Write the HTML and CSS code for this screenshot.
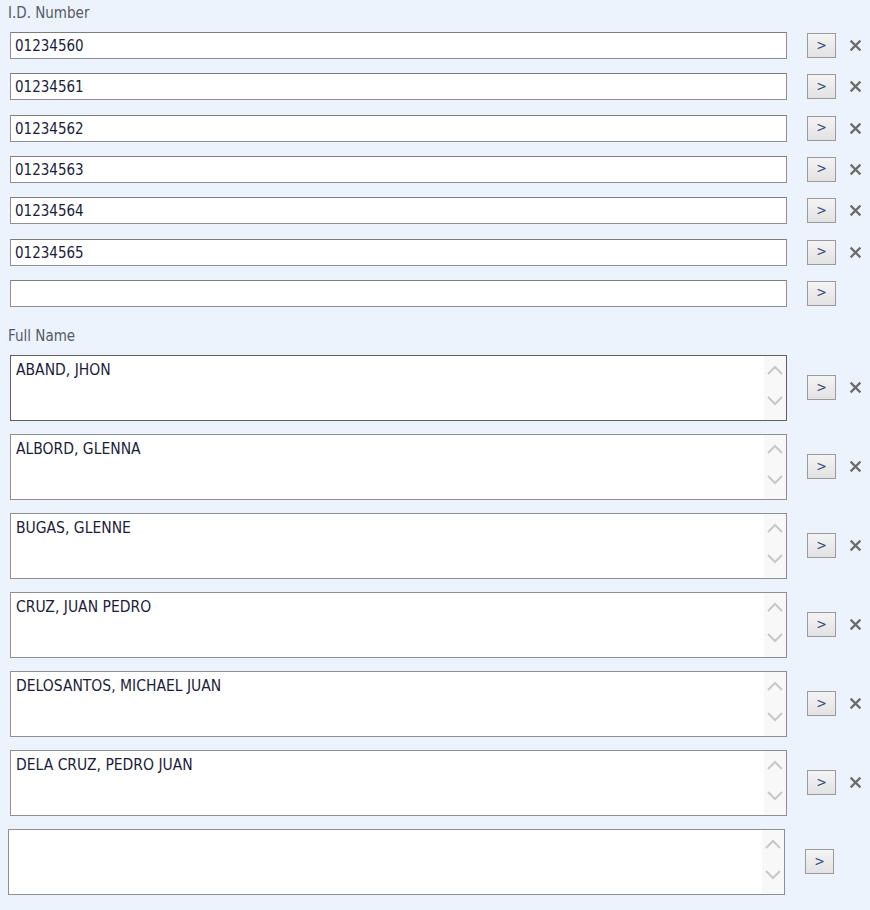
FILE: index.html
```html
<!DOCTYPE html>
<html>
<head>
<meta charset="utf-8">
<link rel="stylesheet" href="styles.css">
</head>
<body>
<div class="page">
  <div class="label label-id">I.D. Number</div>
  <div class="id-list">
    <div class="row"><input class="field" value="01234560"><button class="go">&gt;</button><span class="del"><svg viewBox="0 0 12 12"><path d="M1.5 1.5L10.5 10.5M10.5 1.5L1.5 10.5"/></svg></span></div>
    <div class="row"><input class="field" value="01234561"><button class="go">&gt;</button><span class="del"><svg viewBox="0 0 12 12"><path d="M1.5 1.5L10.5 10.5M10.5 1.5L1.5 10.5"/></svg></span></div>
    <div class="row"><input class="field" value="01234562"><button class="go">&gt;</button><span class="del"><svg viewBox="0 0 12 12"><path d="M1.5 1.5L10.5 10.5M10.5 1.5L1.5 10.5"/></svg></span></div>
    <div class="row"><input class="field" value="01234563"><button class="go">&gt;</button><span class="del"><svg viewBox="0 0 12 12"><path d="M1.5 1.5L10.5 10.5M10.5 1.5L1.5 10.5"/></svg></span></div>
    <div class="row"><input class="field" value="01234564"><button class="go">&gt;</button><span class="del"><svg viewBox="0 0 12 12"><path d="M1.5 1.5L10.5 10.5M10.5 1.5L1.5 10.5"/></svg></span></div>
    <div class="row"><input class="field" value="01234565"><button class="go">&gt;</button><span class="del"><svg viewBox="0 0 12 12"><path d="M1.5 1.5L10.5 10.5M10.5 1.5L1.5 10.5"/></svg></span></div>
    <div class="row"><input class="field" value=""><button class="go">&gt;</button></div>
  </div>

  <div class="label label-name">Full Name</div>
  <div class="name-list">
    <div class="row"><div class="area focused"><div class="area-text">ABAND, JHON</div><div class="scroll"><svg viewBox="0 0 22 64"><path d="M4 18L11 11L18 18M4 41L11 48L18 41"/></svg></div></div><button class="go">&gt;</button><span class="del"><svg viewBox="0 0 12 12"><path d="M1.5 1.5L10.5 10.5M10.5 1.5L1.5 10.5"/></svg></span></div>
    <div class="row"><div class="area"><div class="area-text">ALBORD, GLENNA</div><div class="scroll"><svg viewBox="0 0 22 64"><path d="M4 18L11 11L18 18M4 41L11 48L18 41"/></svg></div></div><button class="go">&gt;</button><span class="del"><svg viewBox="0 0 12 12"><path d="M1.5 1.5L10.5 10.5M10.5 1.5L1.5 10.5"/></svg></span></div>
    <div class="row"><div class="area"><div class="area-text">BUGAS, GLENNE</div><div class="scroll"><svg viewBox="0 0 22 64"><path d="M4 18L11 11L18 18M4 41L11 48L18 41"/></svg></div></div><button class="go">&gt;</button><span class="del"><svg viewBox="0 0 12 12"><path d="M1.5 1.5L10.5 10.5M10.5 1.5L1.5 10.5"/></svg></span></div>
    <div class="row"><div class="area"><div class="area-text">CRUZ, JUAN PEDRO</div><div class="scroll"><svg viewBox="0 0 22 64"><path d="M4 18L11 11L18 18M4 41L11 48L18 41"/></svg></div></div><button class="go">&gt;</button><span class="del"><svg viewBox="0 0 12 12"><path d="M1.5 1.5L10.5 10.5M10.5 1.5L1.5 10.5"/></svg></span></div>
    <div class="row"><div class="area"><div class="area-text">DELOSANTOS, MICHAEL JUAN</div><div class="scroll"><svg viewBox="0 0 22 64"><path d="M4 18L11 11L18 18M4 41L11 48L18 41"/></svg></div></div><button class="go">&gt;</button><span class="del"><svg viewBox="0 0 12 12"><path d="M1.5 1.5L10.5 10.5M10.5 1.5L1.5 10.5"/></svg></span></div>
    <div class="row"><div class="area"><div class="area-text">DELA CRUZ, PEDRO JUAN</div><div class="scroll"><svg viewBox="0 0 22 64"><path d="M4 18L11 11L18 18M4 41L11 48L18 41"/></svg></div></div><button class="go">&gt;</button><span class="del"><svg viewBox="0 0 12 12"><path d="M1.5 1.5L10.5 10.5M10.5 1.5L1.5 10.5"/></svg></span></div>
    <div class="row row-new"><div class="area"><div class="area-text"></div><div class="scroll"><svg viewBox="0 0 22 64"><path d="M4 18L11 11L18 18M4 41L11 48L18 41"/></svg></div></div><button class="go">&gt;</button></div>
  </div>
</div>
</body>
</html>
```

FILE: styles.css
```css
html, body {
  margin: 0;
  padding: 0;
  background: #ecf3fd;
}
body {
  font-family: "DejaVu Sans Condensed", "DejaVu Sans", sans-serif;
  font-stretch: condensed;
  color: #1c1c3a;
}
.page {
  padding: 4px 0 0 10px;
}
.label {
  font-size: 15px;
  color: #555b66;
  line-height: 18px;
  margin-left: -2px;
}
.label-id {
  margin-bottom: 10px;
}
.label-name {
  margin-top: 20px;
  margin-bottom: 10px;
}
.id-list {
  display: flex;
  flex-direction: column;
  gap: 14.33px;
}
.row {
  display: flex;
  align-items: center;
}
.field {
  box-sizing: border-box;
  width: 777px;
  height: 27px;
  margin: 0;
  border: 1px solid #8f8f8f;
  border-top-color: #7d7d7d;
  background: #fff;
  font-family: inherit;
  font-stretch: condensed;
  font-size: 15px;
  color: #1c1c3a;
  padding: 1px 4px 0 4px;
  outline: none;
}
.go {
  box-sizing: border-box;
  width: 29px;
  height: 25px;
  margin: 0 0 0 20px;
  padding: 0 0 2px 0;
  border: 1px solid #9a9a9a;
  background: linear-gradient(#f4f4f4, #e2e2e2);
  font-family: inherit;
  font-stretch: condensed;
  font-size: 14px;
  color: #2f4a78;
  line-height: 20px;
}
.del {
  display: flex;
  margin-left: 13px;
  width: 13px;
  height: 13px;
}
.del svg {
  width: 13px;
  height: 13px;
}
.del path {
  stroke: #6b6b6b;
  stroke-width: 2;
  fill: none;
}
.name-list {
  display: flex;
  flex-direction: column;
  gap: 13px;
}
.area {
  box-sizing: border-box;
  width: 777px;
  height: 66px;
  border: 1px solid #8f8f8f;
  background: #fff;
  display: flex;
}
.area.focused {
  border-color: #5f5f5f;
}
.area-text {
  flex: 1;
  font-size: 15.5px;
  color: #1c1c3a;
  padding: 5px 5px 3px;
  line-height: 18px;
}
.scroll {
  width: 22px;
  background: #f8f8f8;
  display: flex;
}
.scroll svg {
  width: 22px;
  height: 64px;
}
.scroll path {
  stroke: #c8c8c8;
  stroke-width: 2;
  fill: none;
}
.row-new {
  margin-left: -2px;
}
```
